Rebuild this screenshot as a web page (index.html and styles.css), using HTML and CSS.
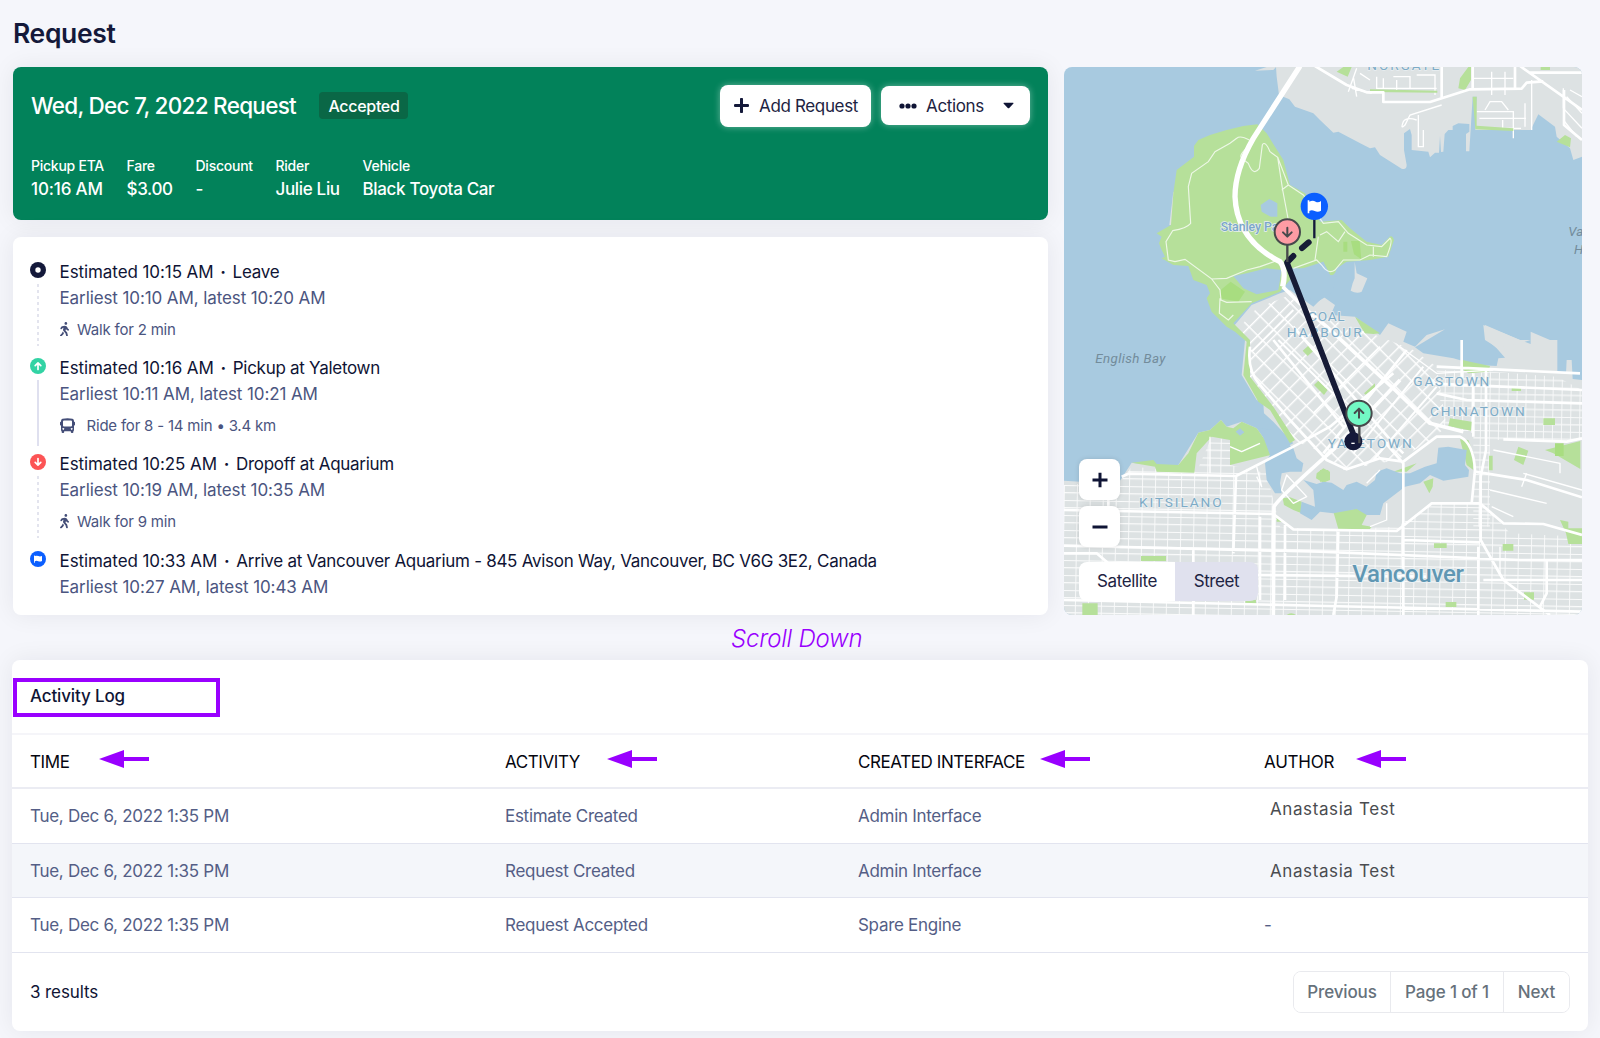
FILE: index.html
```html
<!DOCTYPE html>
<html lang="en">
<head>
<meta charset="utf-8">
<title>Request</title>
<link rel="stylesheet" href="styles.css">
</head>
<body>
<svg width="0" height="0" class="defs">
  <symbol id="walk" viewBox="0 0 320 512"><path d="M208 96c26.500 0 48-21.500 48-48S234.500 0 208 0s-48 21.500-48 48 21.500 48 48 48zm94.500 149.100l-23.300-11.800-9.700-29.400c-14.700-44.600-55.700-75.800-102.200-75.900-36-.1-55.900 10.100-93.300 25.200-21.600 8.700-39.300 25.200-49.700 46.200L17.600 213c-7.800 15.800-1.500 35 14.200 42.900 15.600 7.900 34.600 1.500 42.500-14.300L81 228c3.500-7 9.300-12.500 16.500-15.400l26.800-10.800-15.200 60.700c-5.200 20.800.4 42.900 14.900 58.800l59.900 65.400c7.200 7.900 12.300 17.400 14.900 27.700l18.300 73.300c4.300 17.100 21.700 27.600 38.800 23.300 17.100-4.300 27.600-21.700 23.300-38.800l-22.200-89c-2.600-10.300-7.700-19.900-14.900-27.700l-45.500-49.700 17.200-68.700 5.500 16.500c5.300 16.100 16.700 29.400 31.700 37l23.300 11.800c15.600 7.900 34.600 1.500 42.500-14.300 7.700-15.700 1.400-35.100-14.300-43zM73.600 385.800c-3.200 8.100-8 15.400-14.200 21.500l-50 50.100c-12.500 12.500-12.500 32.800 0 45.300s32.700 12.500 45.200 0l59.400-59.400c6.100-6.100 10.900-13.400 14.200-21.500l13.500-33.800c-55.300-60.300-38.700-41.800-47.400-53.700l-20.700 51.500z"/></symbol>
  <symbol id="arrow" viewBox="0 0 50 18"><path d="M0 9 25 0v7h25v4H25v7z"/></symbol>
</svg>
<main class="page">
  <h1 class="title">Request</h1>
  <div class="top">
    <div class="left">
      <section class="hero">
        <div class="hero-head">
          <h2 class="hero-title">Wed, Dec 7, 2022 Request</h2>
          <span class="badge">Accepted</span>
          <button class="btn btn-add"><svg width="15" height="15" viewBox="0 0 15 15"><path d="M7.500 1.200v12.600M1.200 7.500h12.600" stroke="#14193a" stroke-width="3" stroke-linecap="round"/></svg><span>Add Request</span></button>
          <button class="btn btn-actions"><svg width="18" height="6" viewBox="0 0 18 6" fill="#0f1435"><circle cx="3" cy="3" r="2.600"/><circle cx="9" cy="3" r="2.600"/><circle cx="15" cy="3" r="2.600"/></svg><span>Actions</span><svg class="caret" width="11" height="7" viewBox="0 0 12 7"><path d="M1 .5h10q.8.300.2 1L6.800 6.200q-.8.700-1.600 0L.8 1.500Q.2.800 1 .5z" fill="#0f1435"/></svg></button>
        </div>
        <dl class="facts">
          <div class="fact fact-eta"><dt>Pickup ETA</dt><dd>10:16 AM</dd></div>
          <div class="fact fact-fare"><dt>Fare</dt><dd>$3.00</dd></div>
          <div class="fact fact-discount"><dt>Discount</dt><dd>-</dd></div>
          <div class="fact fact-rider"><dt>Rider</dt><dd>Julie Liu</dd></div>
          <div class="fact"><dt>Vehicle</dt><dd>Black Toyota Car</dd></div>
        </dl>
      </section>
      <section class="timeline">
        <div class="stop">
          <div class="rail"><svg width="16" height="16" viewBox="0 0 16 16"><circle cx="8" cy="8" r="8" fill="#14193a"/><circle cx="8" cy="8" r="2.700" fill="#fff"/></svg><i class="dotted"></i></div>
          <div><p class="when"><span>Estimated 10:15 AM</span> <b>·</b> <span class="place">Leave</span></p><p class="range">Earliest 10:10 AM, latest 10:20 AM</p><p class="leg"><svg width="9" height="14.500"><use href="#walk"/></svg><span>Walk for 2 min</span></p></div>
        </div>
        <div class="stop">
          <div class="rail"><svg width="16" height="16" viewBox="0 0 16 16"><circle cx="8" cy="8" r="8" fill="#32d3a4"/><path d="M8 11.500V5M5.200 7.600 8 4.900l2.800 2.700" fill="none" stroke="#fff" stroke-width="1.700" stroke-linecap="round" stroke-linejoin="round"/></svg><i class="solid"></i></div>
          <div><p class="when"><span>Estimated 10:16 AM</span> <b>·</b> <span class="place">Pickup at Yaletown</span></p><p class="range">Earliest 10:11 AM, latest 10:21 AM</p><p class="leg ride"><svg width="15" height="15" viewBox="0 0 15 15"><path fill-rule="evenodd" d="M2.500.8Q7.500-.5 12.500.8 14 1.300 14 3v.8h.3q.7 0 .7.700v2.300q0 .7-.7.700H14V12q0 .8-.6 1v1q0 1-1 1h-.6q-1 0-1-1v-.8H4.200V14q0 1-1 1h-.6q-1 0-1-1v-1Q1 12.800 1 12V7.500H.7Q0 7.500 0 6.800V4.500q0-.7.700-.7H1V3Q1 1.300 2.500.8zM3 3.500v4q0 1 1 1h7q1 0 1-1v-4q0-1-1-1H4q-1 0-1 1zM3.300 10a.9.900 0 1 0 .01 0zM11.700 10a.9.900 0 1 0 .01 0z"/></svg><span>Ride for 8 - 14 min • 3.4 km</span></p></div>
        </div>
        <div class="stop">
          <div class="rail"><svg width="16" height="16" viewBox="0 0 16 16"><circle cx="8" cy="8" r="8" fill="#fc5455"/><path d="M8 4.500V11M5.200 8.400 8 11.100l2.800-2.700" fill="none" stroke="#fff" stroke-width="1.700" stroke-linecap="round" stroke-linejoin="round"/></svg><i class="dotted"></i></div>
          <div><p class="when"><span>Estimated 10:25 AM</span> <b>·</b> <span class="place">Dropoff at Aquarium</span></p><p class="range">Earliest 10:19 AM, latest 10:35 AM</p><p class="leg"><svg width="9" height="14.500"><use href="#walk"/></svg><span>Walk for 9 min</span></p></div>
        </div>
        <div class="stop">
          <div class="rail"><svg width="16" height="16" viewBox="0 0 16 16"><circle cx="8" cy="8" r="8" fill="#0b5fff"/><path d="M4 4.500h.8v.5q2-.6 3.600.1t3.600-.1v5q-1.800.9-3.700.2t-3.500 0v1.600H4z" fill="#fff"/></svg></div>
          <div><p class="when"><span>Estimated 10:33 AM</span> <b>·</b> <span class="place">Arrive at Vancouver Aquarium - 845 Avison Way, Vancouver, BC V6G 3E2, Canada</span></p><p class="range">Earliest 10:27 AM, latest 10:43 AM</p></div>
        </div>
      </section>
    </div>
    <section class="map">
      <svg class="map-canvas" width="518" height="548" viewBox="12 21 1554 1644">
        <defs>
          <pattern id="grid-south" width="39" height="45" patternUnits="userSpaceOnUse" patternTransform="translate(12 1275) rotate(1)"><path d="M0 1h39M0 23h39M1 0v45" stroke="#fff" stroke-width="3.500" opacity=".85"/></pattern>
          <pattern id="grid-core" width="36" height="46" patternUnits="userSpaceOnUse" patternTransform="translate(575 740) rotate(45)"><path d="M0 2h36M2 0v46" stroke="#fff" stroke-width="4.500"/></pattern>
          <pattern id="grid-east" width="27" height="44" patternUnits="userSpaceOnUse" patternTransform="translate(1290 935) rotate(1)"><path d="M0 1h27M0 23h27M1 0v44" stroke="#fff" stroke-width="3.500" opacity=".8"/></pattern>
        </defs>
        <rect x="12" y="21" width="1554" height="1644" fill="#a8cae0"/>
        <g fill="#dde2e3">
          <path d="M648 21 650 50 657 105 688 118 705 140 760 160 780 180 820 218 835 215 905 252 930 265 945 262 960 285 1025 326Q1040 330 1040 315L1032 270V220L1050 207 1055 225V270L1105 275 1110 292 1125 278 1137 278 1140 228 1143 276 1150 275 1154 222 1165 210H1178V198L1195 190 1228 192V215L1218 222V274H1228L1238 110H1250L1246 210H1412L1435 163 1485 200 1490 230 1530 265 1540 300 1566 290V21z"/>
          <path d="M585 32 620 21H648L640 30z"/>
          <path d="M884 605 890 640 922 655 905 695Q890 702 872 692L878 670 884 655z"/>
          <path d="M340 395 345 400 335 495H328z"/>
          <path d="M520 800 575 735 660 700 690 690 760 740 790 710 825 735 812 765 885 770 960 825 985 790 1040 815 1030 845 1065 860 1100 825 1155 808 1065 862 1090 880 1180 895 1250 915 1310 918 1315 895 1335 893 1310 865 1275 835V795L1380 840 1412 852V815L1470 840H1492V935L1518 940 1520 900H1535L1538 957 1566 960V1665H12V1262L60 1265 180 1262 215 1208 280 1215 355 1215 415 1118 450 1110 483 1080 500 1100 545 1085 590 1105 615 1140 632 1185 700 1150 640 1085 612 1060 610 1030 590 1020 545 945 555 840z"/>
        </g>
        <path d="M1270 795 1380 840H1412L1380 850 1310 862 1275 840z" fill="#dde2e3"/>
        <!-- street grids -->
        <path d="M540 800 590 745 690 705 800 775 960 830 1060 870 1130 920 1160 1100 1100 1150 1010 1200 850 1230 790 1180 700 1140 570 960 560 850z" fill="url(#grid-core)"/>
        <path d="M12 1275 180 1265 215 1220 410 1235 455 1130 510 1140V1215L620 1240 660 1400 780 1410 1010 1400 1120 1330 1270 1330 1350 1420 1566 1430V1665H12z" fill="url(#grid-south)"/>
        <path d="M1130 930 1290 935 1490 950 1566 990V1140H1290V1400L1240 1400V1120L1150 1100z" fill="url(#grid-east)"/>
        <g fill="none" stroke="#fff" stroke-width="4">
          <path d="M880 50 890 110M900 40 930 60M875 85 935 100M890 25 865 95M950 50v35h180M970 55v30M1000 50h50v35M1070 45h55v60M1010 60v30M1295 35v70M1335 35v70M1240 55h120M1250 155h110v80M1275 150 1290 125h35l20 25M1258 175h140M1395 130v70M1510 85v60M1530 90l36 20M1520 110l46 50M1510 145l56 60M1510 180l40 50M1070 180Q1040 170 1030 185 1020 210 1035 195L1050 165 1145 135M1075 165V260h15v-50M1415 60V210M1360 200v-45M1328 180v25h55"/>
        </g>
        <!-- parks -->
        <g fill="#b6e09a">
          <path d="M592 193 550 198 500 210 450 225 415 240 402 258V290L350 330 340 400 333 495 290 520 305 530 297 550 305 570 315 590 305 595 340 615 385 618 400 660 440 675 450 700 440 715 455 755 500 800 525 815 560 845 550 945 595 1025 630 1050 690 1150 705 1140 640 1040 570 950 570 840 520 790 575 730 660 695 690 660 730 625 790 605 810 645Q825 650 830 625L860 605 930 600 985 590 1002 540Q995 520 985 535L965 555 920 545 870 505 845 480 780 485 735 400 690 375 670 300 620 220z"/>
          <path d="M830 35 850 21H875L863 50zM930 88 1132 92V98L930 96zM1195 85 1200 55 1225 21H1233V60L1215 90zM1238 110H1250V197L1360 205 1360 213 1246 208zM1442 21h28v9h-28zM1490 245 1515 225 1533 235 1530 262z"/>
          <path d="M215 1208 280 1200 290 1212 355 1215 385 1180 415 1118 450 1110 483 1080 500 1100 520 1105 545 1085 590 1105 615 1140 632 1185 510 1215V1140L455 1130 410 1180 403 1238 290 1235 285 1220z"/>
          <path d="M745 857 760 873 743 888 728 872zM775 962 803 990 792 1005 762 975zM885 770 960 820 940 822 915 820 905 805zM1208 900 1230 905 1290 918 1285 935 1225 940 1210 930zM1355 983h28v10h-28zM1450 1075h35v20h-35zM1170 1075 1235 1085 1233 1112 1165 1098zM1200 1138 1225 1140 1240 1180V1230L1220 1215zM1375 1160 1405 1172 1390 1215 1362 1200zM1455 1170 1561 1143V1227L1480 1180zM1287 1187h11v44h-11zM1500 1380 1525 1385V1405H1566V1452H1525L1518 1420zM1328 1452h32v20h-32zM1122 1450h38v14h-38zM1392 1597h30v22h-30zM1157 1626h32v15h-32zM243 1488h75v15h-75zM67 1630h46v35H67zM556 1620h32v12h-32zM680 1665Q693 1655 708 1665zM912 1000 945 970 945 982 918 1005zM770 1240 790 1225 810 1235 810 1260 790 1268 768 1255zM668 1315 690 1312 725 1325 725 1360 700 1350 672 1335zM650 1370 672 1385H650zM1000 1235 1070 1210 1040 1235zM820 1355 900 1345 925 1355 905 1395 935 1400 930 1407H835zM1090 1265 1120 1255 1118 1280 1108 1300zM780 1230 805 1230 808 1260 780 1265z"/>
        </g>
        <g fill="#a8dd80"><path d="M512 665 555 695 535 725 480 715 482 690zM850 545h12v30h-12zM873 543h26l5 55-22-15zM1485 1150h26v38h-26z"/></g>
        <!-- inlets and lagoons -->
        <g fill="#a8cae0">
          <path d="M602 435 628 417 652 430V470L632 470 605 455zM520 648 560 640 620 625 665 630 655 690 590 703 550 685zM690 625 750 625 790 605 810 645 830 650 815 700 770 727 700 690zM527 1115 540 1105 553 1117 540 1127z"/>
          <path d="M600 1105 640 1110 670 1140 700 1165 710 1195 730 1210 725 1235 690 1235 665 1240 660 1270 665 1300 645 1300 620 1260 615 1210 630 1185z"/>
          <path d="M730 1260 770 1272 790 1265 815 1268 850 1290 860 1275 890 1265 920 1280 945 1260 950 1235 980 1225 1020 1240 1050 1240 1095 1220 1130 1210 1135 1163 1165 1160 1220 1170 1215 1215 1227 1230 1225 1250 1150 1262 1110 1245 1080 1270 1035 1280 970 1330 960 1365 920 1365 890 1347 820 1360 780 1355 755 1380 720 1360 725 1325 765 1340 760 1290z"/>
        </g>
        <!-- park paths -->
        <g fill="none" stroke="#fff" stroke-width="3.500" opacity=".75">
          <path d="M568 240Q540 225 530 235L510 250 465 275 445 305 395 340 385 380 392 490Q380 505 338 512L318 545 325 600 345 605 375 598 455 657 500 655 560 630 600 620 650 602M455 657 480 690 483 720 500 727 575 725M480 715 478 760 505 780 520 765M565 260Q535 285 545 295L565 310Q580 350 598 325L607 255Q615 240 630 275L653 292 668 390 685 480M653 292 685 375 665 390M685 375 730 405 790 490 835 485 865 520 920 555 965 560 990 535Q1000 540 980 590L930 585 900 600 850 600 825 630Q805 645 785 615L770 600 700 625M775 530 765 600M780 525 800 515 835 545 855 515M940 560v30"/>
        </g>
        <!-- arterial roads -->
        <g fill="none" stroke="#fff" stroke-linejoin="round">
          <path d="M720 18 580 235Q525 330 525 410 530 540 660 605 680 630 668 680" stroke-width="16"/>
          <path d="M668 680 740 750 800 800L1000 985 1110 1090 1210 1115" stroke-width="11"/>
          <path d="M765 18 860 75 920 97H970V126H1110L1230 88 1385 86 1400 68 1450 64M1145 21v97M1238 21v70M1365 21v68M1380 18 1566 150M1410 38H1566M1512 90V195L1566 240" stroke-width="8"/>
          <path d="M185 1250 205 1241 528 1248 700 1160 810 1100 1000 940M12 1350 640 1362 700 1408 1010 1413 1115 1330 1260 1330 1330 1390 1450 1392 1566 1425M12 1457 780 1475 1380 1500H1566M12 1620 800 1638 1566 1655M528 1248 520 1480M1030 1665V1210L960 1130M570 860Q560 930 600 975L690 1080 800 1200 860 1228 960 1195 1030 1205 1130 1130H1200Q1240 1150 1245 1230L1235 1330M640 840 850 1100M700 800 1000 1150 1030 1180M1040 870 790 1180M1130 920 1560 940M1100 970 1566 990M1130 1000 1220 1020 1566 1030M1278 930V1170L1262 1250V1440L1330 1560 1470 1665M1245 1235 1400 1260 1566 1312M1030 1440 1260 1447M400 1470V1665M1255 1460V1665M1460 1500V1600L1440 1640M835 1415 830 1610 820 1665M675 1395V1620M12 1480H110L145 1510V1600M145 1300V1450M600 1370V1620M570 1545 1100 1550M1270 1560H1566M1330 1138 1520 1145 1566 1135M1205 840V960M1240 940V1130" stroke-width="8"/>
          <path d="M640 1665 642 1340Q660 1310 830 1160L1020 960" stroke-width="11"/>
          <path d="M575 875 700 750M655 840 900 1080M960 860 760 1060M1090 920 880 1180M1130 980 940 1200" stroke-width="6"/>
          <path d="M510 1160 545 1175 600 1150M450 1130V1240M590 1220 605 1280 590 1250M680 1245 740 1310 700 1330 665 1290zM1300 1170 1500 1210V1240M1390 1240 1566 1290M1290 1290 1460 1330M1295 1340 1360 1370M1400 1240 1385 1280M1320 1460V1540M1020 860 1130 940 1300 930M960 1230 920 1270M980 1330V1380L930 1400" stroke-width="4"/>
        </g>
        <!-- place names -->
        <g class="places">
          <text x="922" y="30" textLength="216">NORGATE</text>
          <text x="744" y="782" textLength="110">COAL</text>
          <text x="680" y="832" textLength="225">HARBOUR</text>
          <text x="1060" y="978" textLength="228">GASTOWN</text>
          <text x="1110" y="1069" textLength="284">CHINATOWN</text>
          <text x="803" y="1164" textLength="252">YALETOWN</text>
          <text x="237" y="1340" textLength="248">KITSILANO</text>
          <text class="park-name" x="482" y="513" textLength="205">Stanley Park</text>
          <text class="bay" x="106" y="909" textLength="210">English Bay</text>
          <text class="bay" x="1525" y="528">Vancouver</text>
          <text class="bay" x="1542" y="581">Harbour</text>
          <text class="city" x="877" y="1566" textLength="335">Vancouver</text>
        </g>
        <!-- route -->
        <g fill="none" stroke="#161b36" stroke-width="18" stroke-linecap="round">
          <path d="M681 608 883 1130" stroke-width="17"/><path d="M684 604 700 588M726 564 746 547"/>
        </g>
        <circle cx="880" cy="1144" r="27" fill="#14193a"/><path d="M874 1150h10" stroke="#fff" stroke-width="4"/>
        <path d="M898 1090V1150M682 550V606" stroke="#47494c" stroke-width="7"/><path d="M763 475v60" stroke="#14193a" stroke-width="7"/>
        <g stroke="#47494c" stroke-width="6"><circle cx="897" cy="1060" r="38" fill="#72f8c4"/><circle cx="682" cy="516" r="38" fill="#fd9ca4"/></g>
        <g fill="none" stroke="#47494c" stroke-width="6" stroke-linecap="round" stroke-linejoin="round"><path d="M897 1073V1049M884 1059 897 1046 910 1059M682 503V527M669 517 682 530 695 517"/></g>
        <circle cx="763" cy="439" r="41" fill="#0b5fff"/><path d="M743 421h5v4q10-5 19 0 8 4 16-2v29q-9 6-19 1-9-4-16 0v7h-5z" fill="#fff"/>
      </svg>
      <div class="zoom">
        <button aria-label="Zoom in"><svg width="16" height="16" viewBox="0 0 16 16"><path d="M8 .8v14.400M.5 8h15" stroke="#0f1435" stroke-width="3"/></svg></button>
        <button aria-label="Zoom out"><svg width="16" height="16" viewBox="0 0 16 16"><path d="M.5 8h15" stroke="#0f1435" stroke-width="3"/></svg></button>
      </div>
      <div class="layers"><button>Satellite</button><button class="active">Street</button></div>
    </section>
  </div>
  <p class="scroll-note">Scroll Down</p>
  <section class="log">
    <header class="log-head"><div class="log-title">Activity Log</div></header>
    <div class="row row-head">
      <div><span class="head-time">TIME</span><svg class="mark" width="50" height="18"><use href="#arrow"/></svg></div>
      <div><span class="head-activity">ACTIVITY</span><svg class="mark" width="50" height="18"><use href="#arrow"/></svg></div>
      <div><span class="head-interface">CREATED INTERFACE</span><svg class="mark" width="50" height="18"><use href="#arrow"/></svg></div>
      <div><span class="head-author">AUTHOR</span><svg class="mark" width="50" height="18"><use href="#arrow"/></svg></div>
    </div>
    <div class="row"><div>Tue, Dec 6, 2022 1:35 PM</div><div>Estimate Created</div><div>Admin Interface</div><div class="author raised">Anastasia Test</div></div>
    <div class="row striped"><div>Tue, Dec 6, 2022 1:35 PM</div><div>Request Created</div><div>Admin Interface</div><div class="author">Anastasia Test</div></div>
    <div class="row"><div>Tue, Dec 6, 2022 1:35 PM</div><div>Request Accepted</div><div>Spare Engine</div><div>-</div></div>
    <footer class="log-foot"><span class="count">3 results</span><nav class="pager"><button class="prev">Previous</button><button class="current">Page 1 of 1</button><button class="next">Next</button></nav></footer>
  </section>
</main>
</body>
</html>
```
FILE: styles.css
```css
* { box-sizing: border-box; }
body {
  margin: 0;
  width: 1600px;
  height: 1038px;
  overflow: hidden;
  background: #f5f6fb;
  color: #0f1435;
  font-family: Inter, "Liberation Sans", sans-serif;
  font-size: 17px;
}
h1, h2, p, dl, dd { margin: 0; }
button { border: 0; padding: 0; background: #fff; color: inherit; font: inherit; letter-spacing: inherit; }
svg { flex: none; }
.defs { position: absolute; }

.page { display: flex; flex-direction: column; padding: 0 12px; }
.title { height: 67px; padding: 17px 0 0 1px; font-size: 26.500px; font-weight: 600; line-height: 32px; letter-spacing: -.35px; color: #14193a; }

.top { display: grid; grid-template-columns: 1035px 518px; gap: 16px; height: 548px; padding-left: 1px; }
.left { display: flex; flex-direction: column; gap: 17px; }

.hero { height: 153px; padding: 17px 18px 0; border-radius: 8px; background: #02825a; color: #fff; box-shadow: 0 0 24px rgba(20, 20, 40, .07); }
.hero-head { display: flex; align-items: center; height: 43px; }
.hero-title { font-size: 22.500px; font-weight: 500; letter-spacing: -.72px; }
.badge { display: flex; align-items: center; justify-content: center; width: 89px; height: 27px; margin-left: 23.500px; border-radius: 4px; background: #0a6746; font-size: 16px; font-weight: 500; letter-spacing: -.3px; }
.btn { display: flex; align-items: center; border-radius: 8px; box-shadow: 0 0 7px rgba(255, 255, 255, .4); color: #1d2342; letter-spacing: -.35px; }
.btn-add { width: 151px; height: 42px; margin-left: auto; padding-left: 14px; gap: 10px; }
.btn-actions { width: 149px; height: 39px; margin-left: 10px; padding-left: 18px; gap: 9px; }
.caret { margin-left: 10px; }

.facts { display: flex; margin-top: 30px; }
.fact dt { font-size: 14px; line-height: 17px; font-weight: 500; letter-spacing: -.25px; }
.fact dd { margin-top: 3px; line-height: 24px; font-weight: 500; letter-spacing: -.33px; }
.fact-eta { width: 95.500px; }
.fact-eta dd { letter-spacing: -.15px; }
.fact-fare { width: 69px; }
.fact-discount { width: 80px; }
.fact-rider { width: 87px; }

.timeline { height: 378px; padding: 22px 17px 0; border-radius: 8px; background: #fff; box-shadow: 0 0 24px rgba(20, 20, 40, .07); }
.stop { display: flex; gap: 13.500px; height: 96.200px; }
.rail { display: flex; flex-direction: column; align-items: center; width: 16px; padding-top: 3px; }
.rail i { width: 2px; margin-top: 6px; }
.solid { height: 66px; background: #dfe0ef; }
.dotted { height: 62px; background: repeating-linear-gradient(#e3e4ee 0 3px, transparent 3px 6px); }
.when { line-height: 26px; white-space: nowrap; letter-spacing: -.08px; color: #0f1435; }
.when b { margin: 0 2px; }
.place { letter-spacing: -.28px; }
.range { line-height: 26px; letter-spacing: -.1px; color: #4b5580; }
.leg { display: flex; align-items: center; gap: 8.500px; height: 36px; font-size: 15px; letter-spacing: -.2px; color: #4b5580; fill: #444e78; }
.ride { gap: 12px; }

.map { position: relative; height: 548px; border-radius: 8px; overflow: hidden; }
.map-canvas { display: block; }
.places { font-family: Roboto, sans-serif; font-size: 41px; fill: #7dabc6; stroke: #e9eff2; stroke-width: 4px; paint-order: stroke; }
.places .park-name { font-size: 37px; font-weight: 500; fill: #7aa6c8; }
.places .bay { font-size: 40px; font-style: italic; fill: #738c9b; stroke: none; }
.places .city { font-size: 72px; font-weight: 500; fill: #6097b3; stroke-width: 6px; }
.zoom { position: absolute; left: 15px; top: 392px; display: flex; flex-direction: column; gap: 6px; }
.zoom button { display: flex; align-items: center; justify-content: center; width: 41px; height: 41px; border-radius: 8px; box-shadow: 0 0 5px rgba(0, 0, 0, .12); }
.layers { position: absolute; left: 15px; top: 495px; display: flex; width: 179px; height: 39px; border-radius: 8px; overflow: hidden; letter-spacing: -.4px; color: #1d2342; }
.layers button { width: 96px; padding-bottom: 1px; }
.layers .active { width: 83px; background: #e0e1ee; }

.scroll-note { height: 45px; padding: 10px 0 0 719px; font-size: 24px; line-height: 28px; font-style: italic; font-weight: 300; letter-spacing: -.22px; color: #9900ff; }

.log { height: 371px; border-radius: 8px; background: #fff; box-shadow: 0 0 24px rgba(20, 20, 40, .07); }
.log-head { height: 73px; padding: 18px 0 0 1px; }
.log-title { display: flex; align-items: center; width: 207px; height: 39px; padding: 0 0 3px 13px; border: 4px solid #9900ff; font-weight: 500; letter-spacing: -.15px; }
.row { display: grid; grid-template-columns: 475px 353px 406px 1fr; height: 54.500px; padding-left: 18px; border-bottom: 1px solid #e2e4ef; letter-spacing: -.29px; color: #545e86; }
.row > div { display: flex; align-items: center; padding-top: 1px; }
.row-head { height: 56px; border-top: 2px solid #f5f5f9; border-bottom: 2px solid #ebecf3; letter-spacing: -.42px; color: #05060f; }
.striped { background: #f4f6fa; }
.mark { fill: #9900ff; margin-top: -6px; }
.head-time { width: 69px; }
.head-activity { width: 102px; }
.head-interface { width: 182px; }
.head-author { width: 92px; letter-spacing: -.25px; }
.row .author { padding-left: 6px; color: #4a4c50; letter-spacing: .6px; }
.row .raised { padding-bottom: 14px; }
.log-foot { display: flex; align-items: center; justify-content: space-between; height: 78.500px; padding: 0 18px; }
.count { letter-spacing: -.1px; }
.pager { display: flex; height: 42px; border: 1px solid #e9eaee; border-radius: 8px; color: #66717b; overflow: hidden; font-weight: 500; letter-spacing: -.15px; }
.pager button + button { border-left: 1px solid #e9eaee; }
.prev { width: 96px; }
.current { width: 113px; }
.next { width: 66px; }
```
